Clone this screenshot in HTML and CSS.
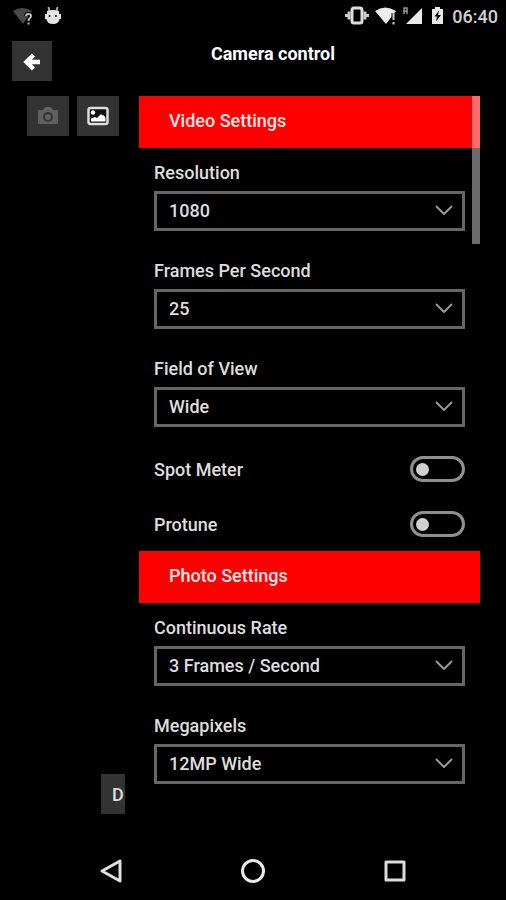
FILE: index.html
```html
<!DOCTYPE html>
<html lang="en">
<head>
<meta charset="utf-8">
<meta name="viewport" content="width=device-width, initial-scale=1">
<title>Camera control</title>
<link rel="stylesheet" href="styles.css">
</head>
<body>
<div class="statusbar">
  <div class="status-group status-left">
    <svg width="22" height="20" viewBox="0 0 22 20" aria-hidden="true">
      <path d="M1 5Q10 -1 20 5L11 18Z" fill="#484848"/>
      <path d="M14 10Q14 8 16.500 8Q19 8 19 10Q19 11.500 17.500 12.500Q16.500 13.300 16.500 15M16.500 16.500v2" fill="none" stroke="#000" stroke-width="4"/>
      <path d="M14 10Q14 8 16.500 8Q19 8 19 10Q19 11.500 17.500 12.500Q16.500 13.300 16.500 15M16.500 16.500v2" fill="none" stroke="#bbb" stroke-width="2"/>
    </svg>
    <svg width="18" height="20" viewBox="0 0 18 20" aria-hidden="true">
      <path d="M4.500 1l1 4M13.500 1l-1 4" stroke="#aaa" stroke-width="2"/>
      <path d="M3 5Q9 3 15 5V8H17V13H15.500Q15 18 9 18Q3 18 2.500 13H1V8H3Z" fill="#e4e4e4"/>
      <circle cx="5.500" cy="10" r="1" fill="#111"/><circle cx="12" cy="10" r="1" fill="#111"/>
    </svg>
  </div>
  <div class="status-group status-right">
    <svg width="24" height="20" viewBox="0 0 24 20" aria-hidden="true">
      <path d="M1.500 8v3M4 5.500v8M20 5.500v8M22.500 8v3" stroke="#ccc" stroke-width="3"/>
      <rect x="7" y="2" width="10" height="15" rx="2" fill="none" stroke="#ddd" stroke-width="3"/>
    </svg>
    <svg width="22" height="20" viewBox="0 0 22 20" aria-hidden="true">
      <path d="M0 5Q10 -2 21 5L11 18Z" fill="#eee"/>
      <path d="M18.500 7v12" stroke="#000" stroke-width="4"/>
      <path d="M18.500 7v7M18.500 16v2.500" stroke="#ccc" stroke-width="2"/>
    </svg>
    <svg width="20" height="20" viewBox="0 0 20 20" aria-hidden="true">
      <path d="M19 2V18H3Z" fill="#e8e8e8"/>
      <path d="M1 8V2H4V5H1M4 5V8" fill="none" stroke="#999" stroke-width="1.500"/>
    </svg>
    <svg class="battery" width="13" height="20" viewBox="0 0 13 20" aria-hidden="true">
      <path d="M1 3H4V1H9V3H12V18H1Z" fill="#e8e8e8"/>
      <path d="M8 4.500L3.500 10.500H6L5 15.500L10 9H7Z" fill="#000"/>
    </svg>
    <span class="clock">06:40</span>
  </div>
</div>

<header class="header">
  <button class="tile back" type="button" aria-label="Back">
    <svg width="18" height="20" viewBox="0 0 18 20" aria-hidden="true"><path d="M10.500 4L3.500 11L10.500 18M4 11H17" fill="none" stroke="#fff" stroke-width="4.500"/></svg>
  </button>
  <h1 class="title">Camera control</h1>
</header>

<main class="content">
  <aside class="side">
    <div class="side-top">
      <button class="tile wide" type="button" aria-label="Take photo" disabled>
        <svg width="22" height="20" viewBox="0 0 22 20" aria-hidden="true"><path d="M2 4H6L8 1H14L16 4H20Q21 4 21 5V17Q21 18 20 18H2Q1 18 1 17V5Q1 4 2 4Z" fill="#606060"/><circle cx="11" cy="11" r="4" fill="none" stroke="#333" stroke-width="2"/></svg>
      </button>
      <button class="tile wide" type="button" aria-label="Gallery">
        <svg width="22" height="20" viewBox="0 0 22 20" aria-hidden="true"><rect x="1.500" y="2" width="19" height="16" rx="2" fill="#111" stroke="#ddd" stroke-width="2.500"/><path d="M4 15.500V12.500L8 11L10 12L14 8L15.500 9.500L16.500 9L18.500 11.500V15.500Z" fill="#fff"/><circle cx="6" cy="6.500" r="2.200" fill="#fff"/></svg>
      </button>
    </div>
    <button class="tile clipped" type="button">D</button>
  </aside>

  <form class="panel">
    <h2 class="banner">Video Settings</h2>
    <div class="field">
      <label for="resolution">Resolution</label>
      <div class="picker"><select id="resolution"><option>1080</option></select><svg class="chevron" viewBox="0 0 18 10" aria-hidden="true"><path d="M1 1L9 9L17 1"/></svg></div>
    </div>
    <div class="field">
      <label for="fps">Frames Per Second</label>
      <div class="picker"><select id="fps"><option>25</option></select><svg class="chevron" viewBox="0 0 18 10" aria-hidden="true"><path d="M1 1L9 9L17 1"/></svg></div>
    </div>
    <div class="field">
      <label for="fov">Field of View</label>
      <div class="picker"><select id="fov"><option>Wide</option></select><svg class="chevron" viewBox="0 0 18 10" aria-hidden="true"><path d="M1 1L9 9L17 1"/></svg></div>
    </div>
    <div class="switches">
      <div class="switch-row"><label for="spot">Spot Meter</label><input class="switch" id="spot" type="checkbox"></div>
      <div class="switch-row"><label for="protune">Protune</label><input class="switch" id="protune" type="checkbox"></div>
    </div>
    <h2 class="banner">Photo Settings</h2>
    <div class="field">
      <label for="rate">Continuous Rate</label>
      <div class="picker"><select id="rate"><option>3 Frames / Second</option></select><svg class="chevron" viewBox="0 0 18 10" aria-hidden="true"><path d="M1 1L9 9L17 1"/></svg></div>
    </div>
    <div class="field">
      <label for="mp">Megapixels</label>
      <div class="picker"><select id="mp"><option>12MP Wide</option></select><svg class="chevron" viewBox="0 0 18 10" aria-hidden="true"><path d="M1 1L9 9L17 1"/></svg></div>
    </div>
    <div class="scroll-thumb"></div>
  </form>
</main>

<nav class="navbar">
  <button type="button" aria-label="Back"><svg width="24" height="26" viewBox="0 0 24 26" aria-hidden="true"><path d="M21 3V23L3 13Z" fill="none" stroke="#e0e0e0" stroke-width="3" stroke-linejoin="round"/></svg></button>
  <button type="button" aria-label="Home"><svg width="26" height="26" viewBox="0 0 26 26" aria-hidden="true"><circle cx="13" cy="13" r="10.500" fill="none" stroke="#e8e8e8" stroke-width="3"/></svg></button>
  <button type="button" aria-label="Recent apps"><svg width="24" height="26" viewBox="0 0 24 26" aria-hidden="true"><rect x="3" y="4" width="18" height="18" fill="none" stroke="#dcdcdc" stroke-width="3" stroke-linejoin="round"/></svg></button>
</nav>
</body>
</html>
```
FILE: styles.css
```css
* {
  box-sizing: border-box;
}

body {
  margin: 0;
  min-height: 100vh;
  display: flex;
  flex-direction: column;
  background: #000;
  color: #dedede;
  font-family: Roboto, "Liberation Sans", sans-serif;
  font-size: 18px;
  font-weight: 500;
}

button {
  border: 0;
  padding: 0;
  font: inherit;
  color: inherit;
  background: none;
}

svg {
  display: block;
}

.statusbar {
  height: 32px;
  padding: 0 8px 0 12px;
  display: flex;
  justify-content: space-between;
  align-items: center;
}

.status-group {
  display: flex;
  align-items: center;
}

.status-left {
  gap: 10px;
}

.status-right {
  gap: 6px;
}

.battery {
  margin: 0 2px;
}

.clock {
  color: #d0d0d0;
}

.header {
  display: flex;
  padding: 9px 12px 15px;
}

.title {
  flex: 1;
  margin: 0;
  font-size: 18px;
  line-height: 26px;
  font-weight: 700;
  text-align: center;
  color: #fff;
}

.tile {
  height: 40px;
  display: flex;
  align-items: center;
  justify-content: center;
  background: #333;
}

.back {
  width: 40px;
}

.wide {
  width: 42px;
}

.content {
  flex: 1;
  display: flex;
  gap: 14px;
  padding-right: 26px;
}

.side {
  width: 125px;
  padding: 0 0 28px 27px;
  display: flex;
  flex-direction: column;
  justify-content: space-between;
}

.side-top {
  display: flex;
  gap: 8px;
}

.clipped {
  align-self: flex-end;
  width: 24px;
  padding-left: 11px;
  justify-content: flex-start;
}

.panel {
  position: relative;
  flex: 1;
}

.banner {
  margin: 0;
  padding: 0 30px 2px;
  font-size: 18px;
  line-height: 50px;
  font-weight: 500;
  background: #f00;
  color: #ffe8e8;
}

.field {
  padding: 11px 15px 15px;
}

.field label {
  display: block;
  margin-bottom: 4px;
  line-height: 28px;
}

.picker {
  position: relative;
}

.picker select {
  display: block;
  width: 100%;
  height: 40px;
  padding: 0 40px 2px 12px;
  border: 3px solid #666;
  border-radius: 0;
  appearance: none;
  background: #000;
  color: inherit;
  font: inherit;
}

.chevron {
  position: absolute;
  top: 14px;
  right: 12px;
  width: 18px;
  height: 10px;
  fill: none;
  stroke: #999;
  stroke-width: 2;
  pointer-events: none;
}

.switches {
  display: grid;
  gap: 1px;
}

.switch-row {
  height: 54px;
  padding: 0 15px;
  display: flex;
  align-items: center;
  justify-content: space-between;
}

.switch {
  appearance: none;
  display: flex;
  align-items: center;
  width: 55px;
  height: 26px;
  margin: 0;
  padding: 0 3px;
  border: 3px solid #909090;
  border-radius: 13px;
}

.switch::before {
  content: "";
  width: 13px;
  height: 13px;
  border-radius: 50%;
  background: #d0d0d0;
}

.switch:checked {
  justify-content: flex-end;
}

.scroll-thumb {
  position: absolute;
  top: 0;
  right: 0;
  width: 8px;
  height: 148px;
  background: rgba(255, 255, 255, 0.42);
}

.navbar {
  height: 58px;
  padding: 0 40px;
  display: grid;
  grid-template-columns: repeat(3, 1fr);
}

.navbar button {
  display: flex;
  align-items: center;
  justify-content: center;
}
```
